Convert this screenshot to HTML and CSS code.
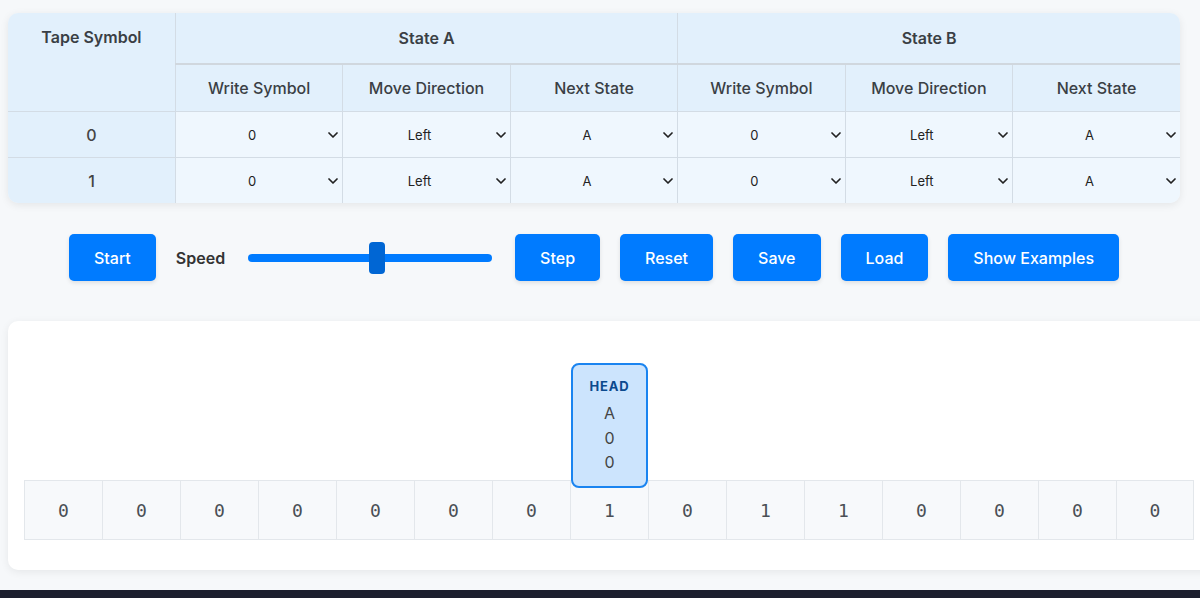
FILE: index.html
```html
<!DOCTYPE html>
<html>
<head>
<meta charset="utf-8">
<link rel="stylesheet" href="styles.css">
</head>
<body>
<div class="page">
  <div class="table-card">
    <table class="rules">
      <thead>
        <tr class="hrow1">
          <th rowspan="2" class="tape-h">Tape Symbol</th>
          <th colspan="3" class="state-h">State A</th>
          <th colspan="3" class="state-h">State B</th>
        </tr>
        <tr class="hrow2">
          <th>Write Symbol</th><th>Move Direction</th><th>Next State</th>
          <th>Write Symbol</th><th>Move Direction</th><th>Next State</th>
        </tr>
      </thead>
      <tbody>
        <tr>
          <td class="sym">0</td>
          <td><div class="sel"><select><option>0</option><option>1</option></select><svg class="chev" viewBox="0 0 10 6"><path d="M1 1l4 4 4-4"/></svg></div></td>
          <td><div class="sel"><select><option>Left</option><option>Right</option></select><svg class="chev" viewBox="0 0 10 6"><path d="M1 1l4 4 4-4"/></svg></div></td>
          <td><div class="sel"><select><option>A</option><option>B</option></select><svg class="chev" viewBox="0 0 10 6"><path d="M1 1l4 4 4-4"/></svg></div></td>
          <td><div class="sel"><select><option>0</option><option>1</option></select><svg class="chev" viewBox="0 0 10 6"><path d="M1 1l4 4 4-4"/></svg></div></td>
          <td><div class="sel"><select><option>Left</option><option>Right</option></select><svg class="chev" viewBox="0 0 10 6"><path d="M1 1l4 4 4-4"/></svg></div></td>
          <td><div class="sel"><select><option>A</option><option>B</option></select><svg class="chev" viewBox="0 0 10 6"><path d="M1 1l4 4 4-4"/></svg></div></td>
        </tr>
        <tr>
          <td class="sym">1</td>
          <td><div class="sel"><select><option>0</option><option>1</option></select><svg class="chev" viewBox="0 0 10 6"><path d="M1 1l4 4 4-4"/></svg></div></td>
          <td><div class="sel"><select><option>Left</option><option>Right</option></select><svg class="chev" viewBox="0 0 10 6"><path d="M1 1l4 4 4-4"/></svg></div></td>
          <td><div class="sel"><select><option>A</option><option>B</option></select><svg class="chev" viewBox="0 0 10 6"><path d="M1 1l4 4 4-4"/></svg></div></td>
          <td><div class="sel"><select><option>0</option><option>1</option></select><svg class="chev" viewBox="0 0 10 6"><path d="M1 1l4 4 4-4"/></svg></div></td>
          <td><div class="sel"><select><option>Left</option><option>Right</option></select><svg class="chev" viewBox="0 0 10 6"><path d="M1 1l4 4 4-4"/></svg></div></td>
          <td><div class="sel"><select><option>A</option><option>B</option></select><svg class="chev" viewBox="0 0 10 6"><path d="M1 1l4 4 4-4"/></svg></div></td>
        </tr>
      </tbody>
    </table>
  </div>

  <div class="controls">
    <button class="btn">Start</button>
    <label class="speed">Speed</label>
    <input class="slider" type="range" min="0" max="100" value="53">
    <button class="btn">Step</button>
    <button class="btn">Reset</button>
    <button class="btn">Save</button>
    <button class="btn">Load</button>
    <button class="btn">Show Examples</button>
  </div>

  <div class="tape-card">
    <div class="head">
      <div class="head-title">HEAD</div>
      <div class="head-line">A</div>
      <div class="head-line">0</div>
      <div class="head-line">0</div>
    </div>
    <div class="tape">
      <div class="cell">0</div><div class="cell">0</div><div class="cell">0</div><div class="cell">0</div><div class="cell">0</div><div class="cell">0</div><div class="cell">0</div><div class="cell">1</div><div class="cell">0</div><div class="cell">1</div><div class="cell">1</div><div class="cell">0</div><div class="cell">0</div><div class="cell">0</div><div class="cell last">0</div>
    </div>
  </div>
</div>
<div class="footer-bar"></div>
</body>
</html>
```

FILE: styles.css
```css
html, body {
  margin: 0;
  padding: 0;
  overflow: hidden;
}
body {
  background: #f6f8fa;
  font-family: Inter, "Noto Sans", sans-serif;
  color: #333;
  height: 598px;
  display: flex;
  flex-direction: column;
}
.page {
  padding: 13px 0 0 8px;
  flex: 1;
}
.table-card {
  width: 1172px;
  border-radius: 10px;
  overflow: hidden;
  box-shadow: 0 2px 8px rgba(0, 0, 0, 0.08);
}
.rules {
  width: 100%;
  border-collapse: collapse;
  table-layout: fixed;
}
.rules th, .rules td {
  border: 1px solid #d3dce5;
  text-align: center;
}
.rules tr > :first-child { border-left: none; }
.rules tr > :last-child { border-right: none; }
.rules thead tr:first-child > * { border-top: none; }
.rules tbody tr:last-child > * { border-bottom: none; }
.rules th {
  background: #e2f0fc;
  color: #3a3f45;
  font-size: 16px;
}
.hrow1 th {
  height: 50px;
  font-weight: 600;
  border-bottom: 2px solid #d0d7de;
  padding: 0;
}
.hrow1 .tape-h {
  vertical-align: top;
  padding-top: 14px;
  border-bottom: 1px solid #d3dce5;
}
.hrow2 th {
  height: 46px;
  font-weight: 500;
  padding: 0;
}
.rules td {
  height: 45px;
  background: #eff7fe;
  padding: 0 8px;
}
.rules td.sym {
  background: #e2f0fc;
  font-size: 16px;
  font-weight: 500;
  color: #444;
}
.sel {
  position: relative;
}
.sel select {
  width: 100%;
  appearance: none;
  -webkit-appearance: none;
  border: none;
  background: transparent;
  font-family: Inter, "Noto Sans", sans-serif;
  font-size: 13px;
  color: #222;
  text-align: center;
  text-align-last: center;
  padding: 4px 14px 4px 0;
  outline: none;
}
.chev {
  position: absolute;
  right: -4px;
  top: 50%;
  width: 10px;
  height: 6px;
  margin-top: -3px;
  pointer-events: none;
}
.chev path {
  fill: none;
  stroke: #222;
  stroke-width: 1.7;
  stroke-linecap: round;
  stroke-linejoin: round;
}

.controls {
  width: 1172px;
  display: flex;
  align-items: center;
  justify-content: center;
  gap: 20px;
  margin-top: 31px;
}
.btn {
  background: #007bff;
  color: #fff;
  border: none;
  border-radius: 5px;
  font-family: Inter, "Noto Sans", sans-serif;
  font-size: 16px;
  font-weight: 500;
  height: 47px;
  padding: 0 25px;
  box-shadow: 0 2px 4px rgba(0, 0, 0, 0.1);
}
.speed {
  font-size: 16px;
  font-weight: 600;
  color: #333;
}
.slider {
  -webkit-appearance: none;
  appearance: none;
  width: 244px;
  height: 34px;
  margin: 0 3px;
  background: transparent;
}
.slider::-webkit-slider-runnable-track {
  height: 8px;
  background: #007bff;
  border-radius: 4px;
}
.slider::-webkit-slider-thumb {
  -webkit-appearance: none;
  width: 16px;
  height: 32px;
  margin-top: -12px;
  background: #0066d4;
  border-radius: 4px;
  border: none;
}

.tape-card {
  position: relative;
  margin-top: 40px;
  width: 1210px;
  height: 249px;
  background: #fff;
  border-radius: 10px;
  box-shadow: 0 2px 8px rgba(0, 0, 0, 0.07);
  box-sizing: border-box;
  padding: 159px 0 0 16px;
}
.tape {
  display: flex;
}
.cell {
  flex: none;
  width: 78px;
  height: 60px;
  box-sizing: border-box;
  border: 1px solid #e3e7eb;
  border-right: none;
  background: #f7f9fb;
  display: flex;
  align-items: center;
  justify-content: center;
  font-family: "DejaVu Sans Mono", monospace;
  font-size: 18px;
  color: #4a4f55;
}
.cell.last {
  border-right: 1px solid #e3e7eb;
}
.head {
  position: absolute;
  left: 563px;
  top: 42px;
  width: 77px;
  height: 125px;
  box-sizing: border-box;
  background: #cce4fd;
  border: 2px solid #1a84f0;
  border-radius: 8px;
  z-index: 2;
  text-align: center;
  padding-top: 13px;
}
.head-title {
  font-size: 13px;
  font-weight: 700;
  color: #0b4a8e;
  letter-spacing: 0.8px;
  line-height: 16px;
  margin-bottom: 7px;
}
.head-line {
  font-size: 16px;
  line-height: 24.5px;
  color: #444;
}
.footer-bar {
  height: 8px;
  background: #1c1f2e;
}
```
